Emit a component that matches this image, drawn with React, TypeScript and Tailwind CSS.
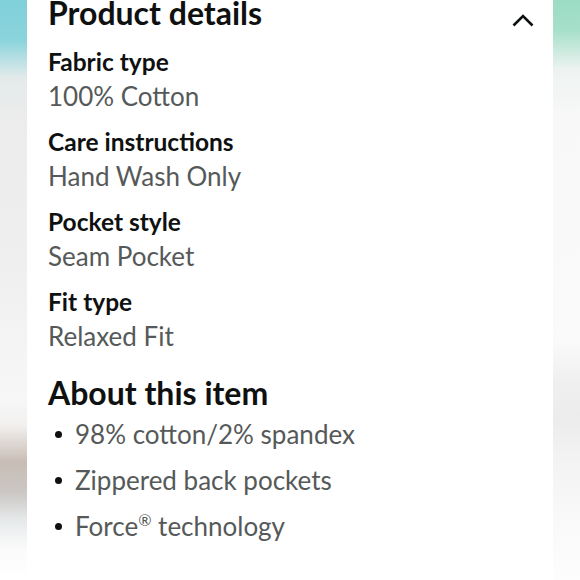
import React from 'react';

const details = [
  { label: 'Fabric type', value: '100% Cotton' },
  { label: 'Care instructions', value: 'Hand Wash Only' },
  { label: 'Pocket style', value: 'Seam Pocket' },
  { label: 'Fit type', value: 'Relaxed Fit' },
];

const bullets = ['98% cotton/2% spandex', 'Zippered back pockets', 'Force® technology'];

export default function App() {
  return (
    <div className="flex w-[580px] h-[580px] overflow-hidden bg-white font-['Lato',sans-serif]">
      {/* blurred backdrop, left */}
      <div className="w-[27px] shrink-0 bg-[linear-gradient(to_bottom,#7fd0da_0px,#8ad4dc_40px,#e4eaea_78px,#ececec_120px,#efefef_260px,#f7f7f7_400px,#f2f0ef_425px,#c8bdb5_462px,#cbc7c4_492px,#e6e9ea_520px,#fbfbfb_550px,#ffffff_580px)]" />

      {/* card */}
      <div className="flex-1 bg-white pl-[21px] pr-[19px]">
        <div className="flex items-start justify-between">
          <h2 className="text-[32px] leading-[26px] font-bold text-[#0f1111]">Product details</h2>
          <svg width="22" height="13" viewBox="0 0 22 13" className="mt-[14px]">
            <path d="M1.5 11.5 L11 2 L20.5 11.5" fill="none" stroke="#0f1111" strokeWidth="2.6" />
          </svg>
        </div>

        <div className="mt-[18px] flex flex-col gap-[12px]">
          {details.map(d => (
            <div key={d.label}>
              <div className="text-[24.5px] leading-[34px] font-bold text-[#0f1111]">{d.label}</div>
              <div className="text-[26px] leading-[34px] text-[#565959]">{d.value}</div>
            </div>
          ))}
        </div>

        <h2 className="mt-[27px] text-[32px] leading-[26px] font-bold text-[#0f1111]">About this item</h2>
        <ul className="mt-[5px]">
          {bullets.map(b => (
            <li key={b} className="flex items-center text-[26px] leading-[46px] text-[#565959]">
              <span className="ml-[7px] mr-[13px] w-[7px] h-[7px] rounded-full bg-[#0f1111] shrink-0" />
              <span>
                {b.includes('®') ? (
                  <>
                    Force<sup className="text-[16px] top-[-10px]">®</sup> technology
                  </>
                ) : (
                  b
                )}
              </span>
            </li>
          ))}
        </ul>
      </div>

      {/* blurred backdrop, right */}
      <div className="w-[27px] shrink-0 bg-[linear-gradient(to_bottom,#9cdcc4_0px,#a6dfca_30px,#eef3f1_70px,#f8f8f8_120px,#fafafa_340px,#f0f0f0_380px,#ececec_420px,#f3f3f3_460px,#f9f9f9_520px,#fdfdfd_580px)]" />
    </div>
  );
}
